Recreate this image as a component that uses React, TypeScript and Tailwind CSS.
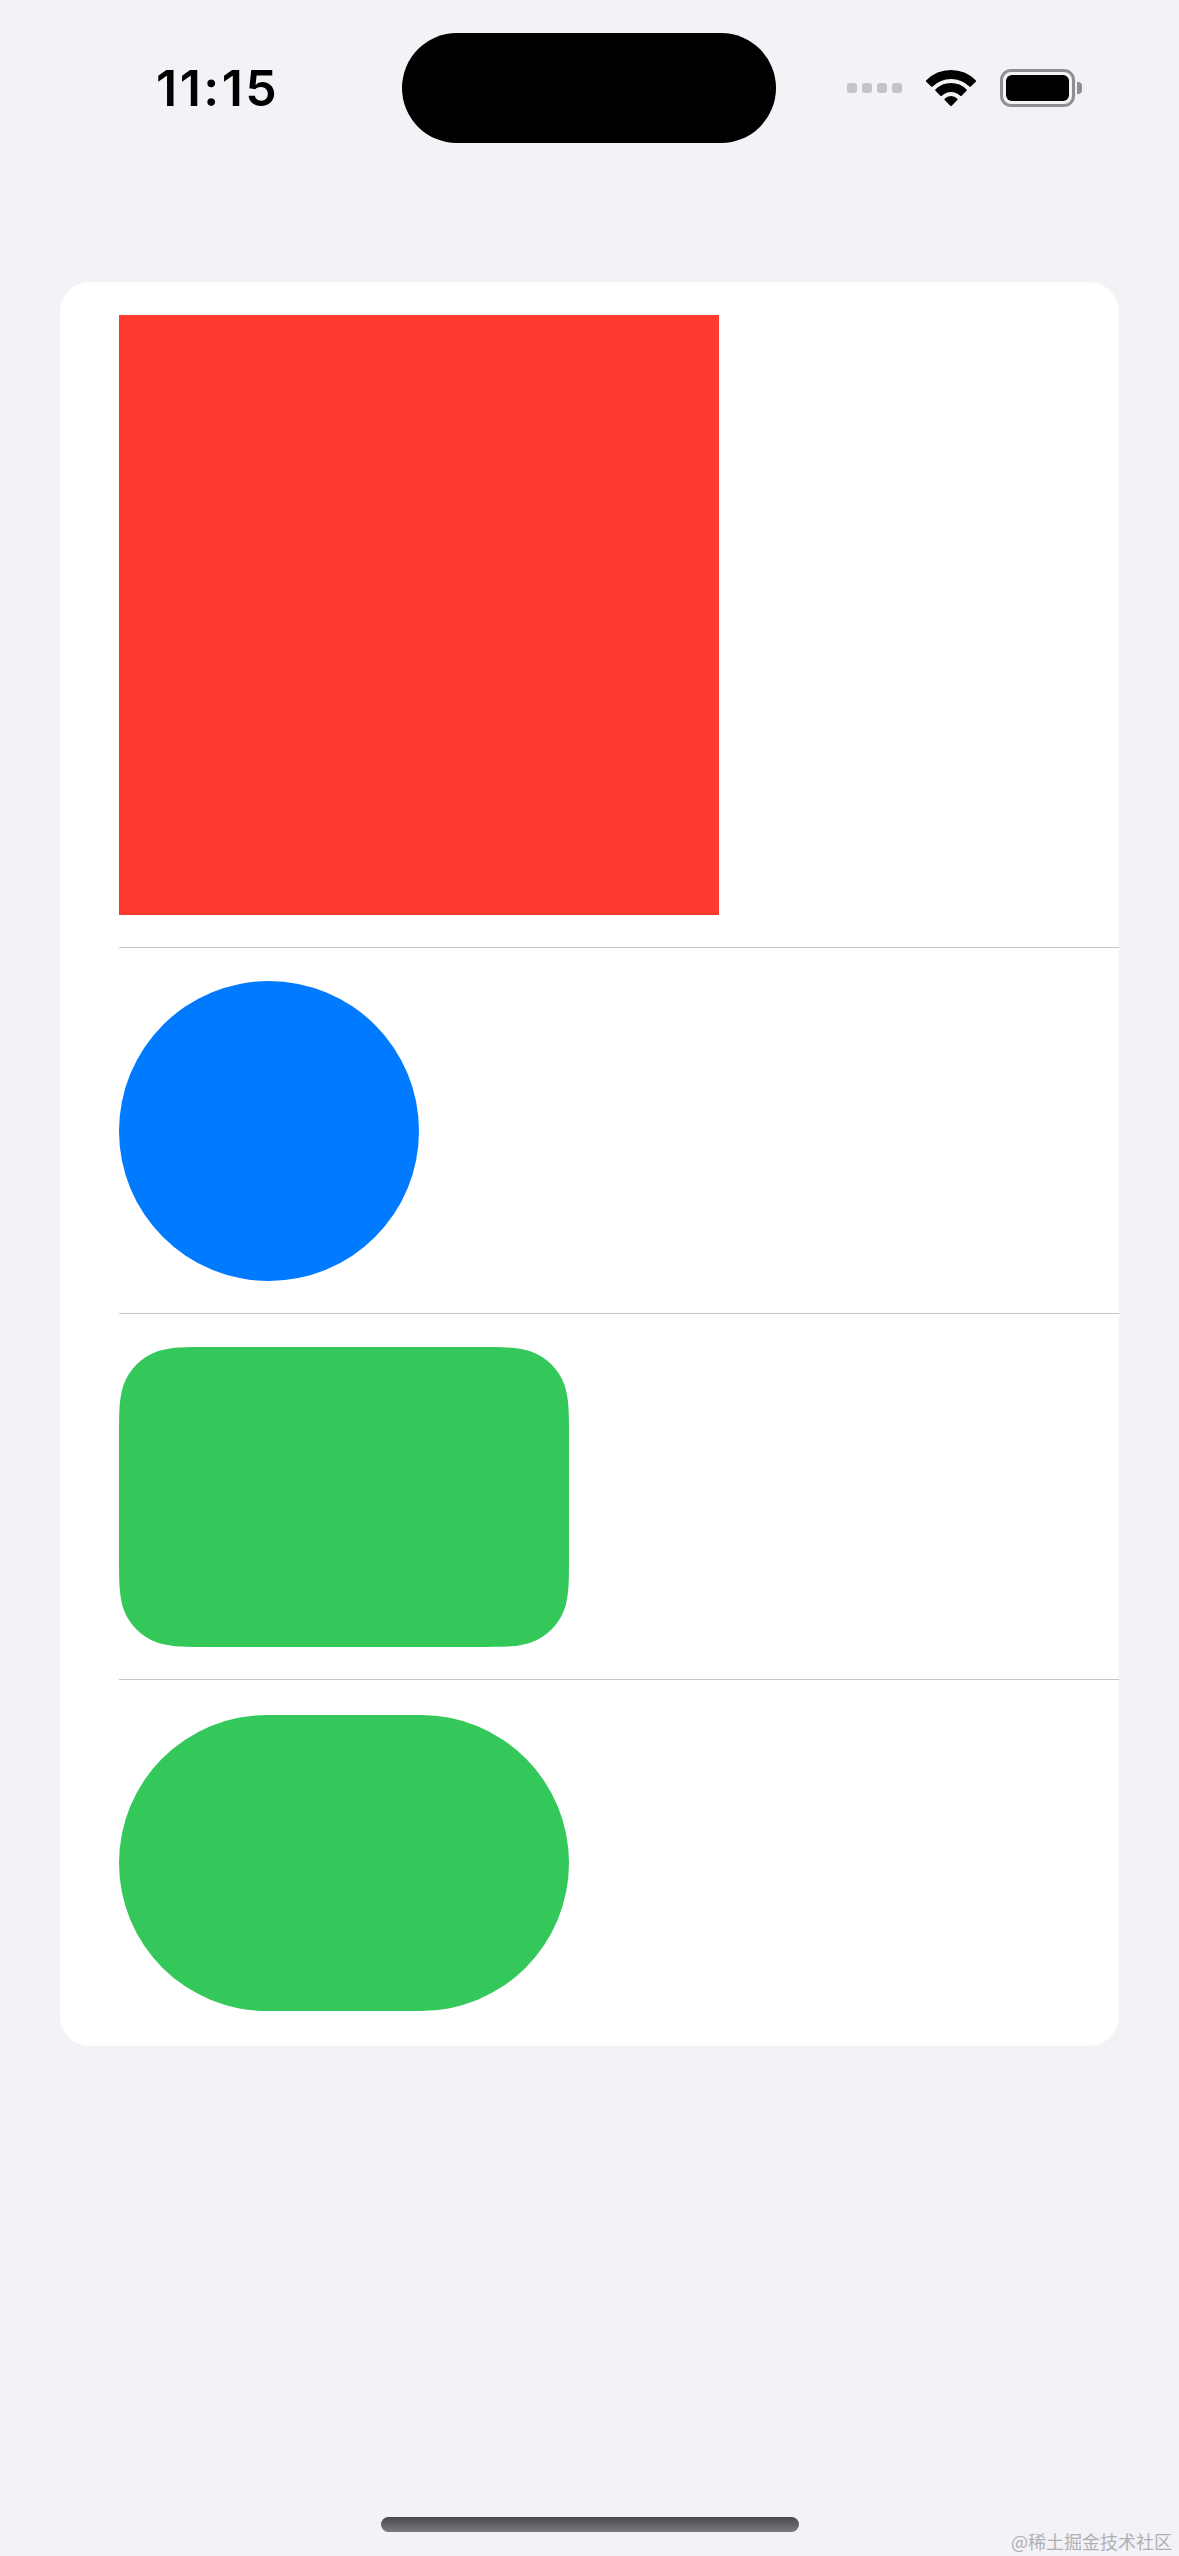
import React from "react"

// iOS-style "continuous" corner path (approximation of RoundedRectangle(style: .continuous))
function continuousRect(w: number, h: number, r: number) {
  const a = 1.52866483 * r
  const b = 1.08849323 * r
  const c = 0.86840689 * r
  const d = 0.63149399 * r
  const e = 0.074911 * r
  const f = 0.37282392 * r
  const g = 0.16905 * r
  return [
    `M ${a} 0`,
    `L ${w - a} 0`,
    `C ${w - b} 0 ${w - c} 0 ${w - d} ${e}`,
    `C ${w - f} ${g} ${w - g} ${f} ${w - e} ${d}`,
    `C ${w} ${c} ${w} ${b} ${w} ${a}`,
    `L ${w} ${h - a}`,
    `C ${w} ${h - b} ${w} ${h - c} ${w - e} ${h - d}`,
    `C ${w - g} ${h - f} ${w - f} ${h - g} ${w - d} ${h - e}`,
    `C ${w - c} ${h} ${w - b} ${h} ${w - a} ${h}`,
    `L ${a} ${h}`,
    `C ${b} ${h} ${c} ${h} ${d} ${h - e}`,
    `C ${f} ${h - g} ${g} ${h - f} ${e} ${h - d}`,
    `C 0 ${h - c} 0 ${h - b} 0 ${h - a}`,
    `L 0 ${a}`,
    `C 0 ${b} 0 ${c} ${e} ${d}`,
    `C ${g} ${f} ${f} ${g} ${d} ${e}`,
    `C ${c} 0 ${b} 0 ${a} 0 Z`,
  ].join(" ")
}

function SignalDots() {
  return (
    <div className="flex items-center gap-[5px]">
      {Array.from({ length: 4 }).map((_, i) => (
        <div key={i} className="w-[10px] h-[10px] rounded-[3px] bg-[#c4c4c8]" />
      ))}
    </div>
  )
}

function Wifi() {
  return (
    <svg width="52" height="38" viewBox="0 0 52 38">
      <g fill="#000" stroke="#000" strokeWidth="2" strokeLinejoin="round">
        <path d="M1.96 11.96 A34 34 0 0 1 50.04 11.96 L45.09 16.91 A27 27 0 0 0 6.91 16.91 Z" />
        <path d="M11.15 21.15 A21 21 0 0 1 40.85 21.15 L35.9 26.1 A14 14 0 0 0 16.1 26.1 Z" />
        <path d="M20.34 30.34 A8 8 0 0 1 31.66 30.34 L26 36 Z" />
      </g>
    </svg>
  )
}

function Battery() {
  return (
    <div className="flex items-center gap-[2px]">
      <div className="w-[75px] h-[38px] rounded-[11px] border-[3px] border-[#8e8e93] p-[3px]">
        <div className="w-full h-full rounded-[6px] bg-black" />
      </div>
      <div className="w-[5px] h-[12px] rounded-r-[4px] bg-[#8e8e93]" />
    </div>
  )
}

export default function App() {
  return (
    <div className="relative h-[2556px] w-full overflow-hidden bg-[#f2f2f7]">
      {/* Status bar */}
      <div className="relative mt-[33px] flex h-[110px] items-center justify-between pl-[156px] pr-[97px]">
        <span
          className="text-[50px] font-semibold tracking-[2.5px] text-black leading-none"
          style={{ fontFamily: "Inter, 'Liberation Sans', sans-serif" }}
        >
          11:15
        </span>
        <div className="absolute left-[402px] top-0 h-[110px] w-[374px] rounded-full bg-black" />
        <div className="flex items-center gap-[23px]">
          <SignalDots />
          <Wifi />
          <Battery />
        </div>
      </div>

      {/* List card */}
      <div className="mx-[60px] mt-[139px] rounded-[30px] bg-white pl-[59px]">
        <div className="pt-[33px] pb-[32px] border-b border-[#c6c6c8]">
          <div className="w-[600px] h-[600px] bg-[#ff3b30]" />
        </div>
        <div className="pt-[33px] pb-[32px] border-b border-[#c6c6c8]">
          <div className="w-[300px] h-[300px] rounded-full bg-[#007aff]" />
        </div>
        <div className="pt-[33px] pb-[32px] border-b border-[#c6c6c8]">
          <svg width="450" height="300" viewBox="0 0 450 300" className="block">
            <path d={continuousRect(450, 300, 60)} fill="#34c759" />
          </svg>
        </div>
        <div className="pt-[35px] pb-[35px]">
          <div className="w-[450px] h-[296px] rounded-full bg-[#34c759]" />
        </div>
      </div>

      {/* Home indicator */}
      <div className="absolute bottom-[24px] left-[381px] h-[15px] w-[418px] rounded-full bg-gradient-to-b from-[#48484c] to-[#7c7c80]" />

      {/* Watermark */}
      <span
        className="absolute bottom-[6px] right-[7px] text-[18px] leading-none text-[#b0b0b4]"
        style={{ fontFamily: "'Noto Sans CJK SC', sans-serif" }}
      >
        @稀土掘金技术社区
      </span>
    </div>
  )
}
